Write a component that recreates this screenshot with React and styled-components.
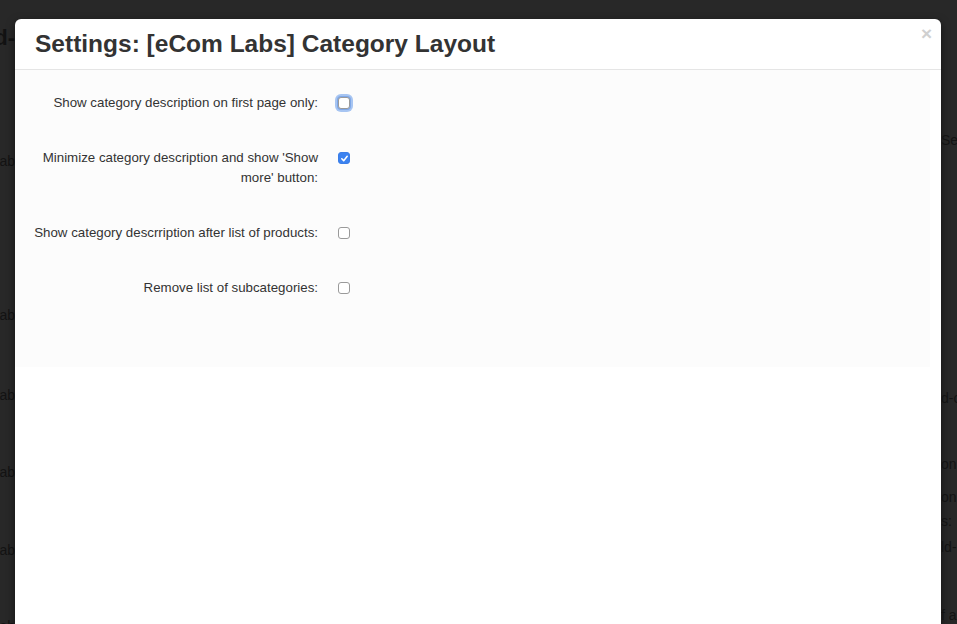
import React from 'react';
import styled, { createGlobalStyle } from 'styled-components';

const GlobalStyle = createGlobalStyle`
	html, body {
		margin: 0;
		padding: 0;
		height: 100%;
		overflow: hidden;
		background: #282828;
	}
	body {
		font-family: 'Liberation Sans', Arial, Helvetica, sans-serif;
	}
`;

const options = [
	{ label: 'Show category description on first page only:', checked: false, focused: true },
	{ label: "Minimize category description and show 'Show more' button:", checked: true },
	{ label: 'Show category descrription after list of products:', checked: false },
	{ label: 'Remove list of subcategories:', checked: false },
];

// bits of the page behind the dimmed backdrop, seen on both sides of the modal
const leftBits = [
	{ text: 'ab', space: 102 },
	{ text: 'ab', space: 136 },
	{ text: 'ab', space: 62 },
	{ text: 'ab', space: 59 },
	{ text: 'ab', space: 60 },
	{ text: 'ab', space: 58 },
];

const rightBits = [
	{ text: 'Se', space: 112 },
	{ text: 'd-c', space: 240 },
	{ text: 'on', space: 48 },
	{ text: 'on', space: 15 },
	{ text: 's:', space: 6 },
	{ text: 'ld-', space: 8 },
	{ text: 'f a', space: 50 },
];

const Check = () => (
	<svg width="9" height="9" viewBox="0 0 10 10">
		<path
			d="M2 5.3 L4.1 7.4 L8 2.6"
			fill="none"
			stroke="#fff"
			strokeWidth="1.7"
			strokeLinecap="round"
			strokeLinejoin="round"
		/>
	</svg>
);

const App = () => {
	return (
		<>
			<GlobalStyle />
			<StyledPage>
				<StyledStrip>
					<StyledBigBit>d-</StyledBigBit>
					{leftBits.map((b, i) => (
						<StyledBit key={i} $space={b.space}>
							{b.text}
						</StyledBit>
					))}
				</StyledStrip>
				<StyledModal>
					<StyledHeader>
						<StyledTitle>Settings: [eCom Labs] Category Layout</StyledTitle>
						<StyledClose>×</StyledClose>
					</StyledHeader>
					<StyledPanel>
						{options.map((opt) => (
							<StyledRow key={opt.label}>
								<StyledLabel>{opt.label}</StyledLabel>
								<StyledBox $checked={opt.checked} $focused={opt.focused}>
									{opt.checked && <Check />}
								</StyledBox>
							</StyledRow>
						))}
					</StyledPanel>
				</StyledModal>
				<StyledStrip $right>
					{rightBits.map((b, i) => (
						<StyledBit key={i} $space={b.space}>
							{b.text}
						</StyledBit>
					))}
				</StyledStrip>
			</StyledPage>
		</>
	);
};

const StyledPage = styled.div`
	display: flex;
	width: 957px;
	height: 624px;
	overflow: hidden;
	box-sizing: border-box;
	padding-top: 19px;
	background: #282828;
`;

const StyledStrip = styled.div`
	flex: ${(p) => (p.$right ? '1' : 'none')};
	width: ${(p) => (p.$right ? 'auto' : '15px')};
	min-width: 0;
	overflow: hidden;
	display: flex;
	flex-direction: column;
	align-items: ${(p) => (p.$right ? 'flex-start' : 'flex-end')};
`;

const StyledBigBit = styled.div`
	margin-top: 7px;
	font-size: 22px;
	line-height: 24px;
	font-weight: bold;
	color: #121212;
	white-space: nowrap;
`;

const StyledBit = styled.div`
	margin-top: ${(p) => p.$space}px;
	font-size: 14px;
	line-height: 18px;
	color: #131313;
	white-space: nowrap;
`;

const StyledModal = styled.div`
	flex: none;
	width: 926px;
	height: 640px;
	background: #fff;
	border-radius: 6px 6px 0 0;
	box-shadow: 0 3px 9px rgba(0, 0, 0, 0.5);
	overflow: hidden;
`;

const StyledHeader = styled.div`
	position: relative;
	height: 51px;
	box-sizing: border-box;
	padding: 11px 20px 0 20px;
	border-bottom: 1px solid #e5e5e5;
`;

const StyledTitle = styled.h3`
	margin: 0;
	font-size: 24.5px;
	line-height: 28px;
	font-weight: bold;
	color: #333;
`;

const StyledClose = styled.span`
	position: absolute;
	right: 9px;
	top: 4px;
	font-size: 19px;
	font-weight: bold;
	color: #d0d0d0;
	line-height: 22px;
`;

const StyledPanel = styled.div`
	width: 915px;
	height: 297px;
	box-sizing: border-box;
	background: #fcfcfc;
	padding-top: 23px;
	display: flex;
	flex-direction: column;
	gap: 35px;
`;

const StyledRow = styled.div`
	display: grid;
	grid-template-columns: 303px auto;
	column-gap: 20px;
	align-items: start;
`;

const StyledLabel = styled.div`
	text-align: right;
	font-size: 13.3px;
	line-height: 20px;
	color: #333;
	padding-left: 18px;
`;

const StyledBox = styled.span`
	margin-top: 4px;
	width: 12px;
	height: 12px;
	box-sizing: border-box;
	border-radius: 3px;
	display: flex;
	align-items: center;
	justify-content: center;
	background: ${(p) => (p.$checked ? '#3b82f0' : '#fff')};
	border: 1px solid ${(p) => (p.$checked ? '#3b7ee8' : '#9a9a9a')};
	box-shadow: ${(p) =>
		p.$focused ? '0 0 0 1px #7fa8e8, 0 0 0 3px rgba(110, 160, 235, 0.6)' : 'none'};
`;

export default App;
